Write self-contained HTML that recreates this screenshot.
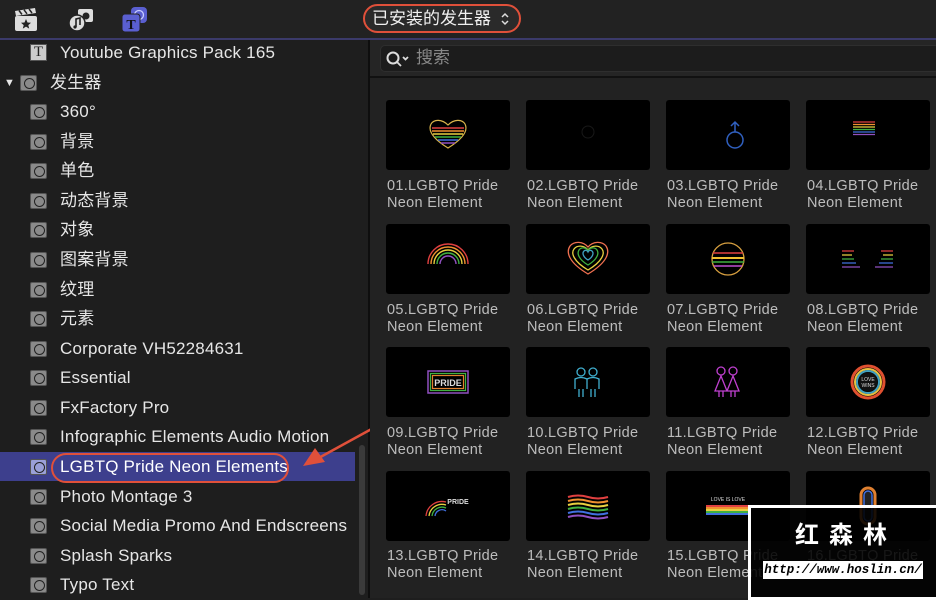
<!DOCTYPE html>
<html><head><meta charset="utf-8"><style>
*{margin:0;padding:0;box-sizing:border-box}
body{width:936px;height:598px;background:#1e1e1e;position:relative;overflow:hidden;font-family:"Liberation Sans","Noto Sans CJK SC",sans-serif;color:#e6e6e6}
.a{position:absolute}
.row{position:absolute;left:0;width:355px;height:29px;font-size:17px;line-height:30px}
.row .ic{position:absolute;left:30px;top:7px;width:17px;height:16px;background:#8a8a8a;border:1px solid #555;border-radius:2px}
.row .ic:after{content:"";position:absolute;left:3px;top:2px;width:9px;height:9px;border:1.5px solid #222;border-radius:50%}
.row span{position:absolute;left:60px;letter-spacing:0.2px}
.th{position:absolute;width:124px;height:70px;background:#000;border-radius:3px}
.lb{position:absolute;font-size:14.5px;line-height:17px;color:#bdbdbd;width:140px;letter-spacing:0.3px}
</style></head><body>
<div class="a" style="left:0;top:0;width:936px;height:38px;background:#222"></div>
<div class="a" style="left:0;top:38px;width:936px;height:2px;background:#3b3a6a"></div>
<svg class="a" style="left:13px;top:7px" width="26" height="26" viewBox="0 0 26 26"><rect x="2" y="9" width="22" height="15" rx="2" fill="#ddd"/><path d="M2 4l20-3 1 5-20 3z" fill="#ddd"/><path d="M6 3.5l3 4M11 2.8l3 4M16 2l3 4" stroke="#222" stroke-width="1.5"/><path d="M13 12l1.5 3.5 3.5.3-2.7 2.3.9 3.5-3.2-2-3.2 2 .9-3.5-2.7-2.3 3.5-.3z" fill="#222"/></svg>
<svg class="a" style="left:67px;top:6px" width="28" height="28" viewBox="0 0 28 28"><rect x="11" y="3" width="15" height="13" rx="2" fill="#ddd"/><circle cx="19" cy="10" r="3.5" fill="#222"/><circle cx="10" cy="17" r="8" fill="#ddd" stroke="#222" stroke-width="1.5"/><path d="M9 21V13l4-1v7" stroke="#222" stroke-width="1.6" fill="none"/><circle cx="8" cy="21" r="1.6" fill="#222"/></svg>
<svg class="a" style="left:121px;top:6px" width="28" height="28" viewBox="0 0 28 28"><rect x="10" y="1" width="16" height="16" rx="4" fill="#5a5fd0"/><circle cx="18" cy="9" r="4.5" fill="none" stroke="#c8ccff" stroke-width="1.3"/><rect x="1" y="8" width="18" height="18" rx="3" fill="#5a5fd0" stroke="#222" stroke-width="1"/><text x="10" y="23" font-size="14" font-family="Liberation Serif" font-weight="bold" fill="#111" text-anchor="middle">T</text></svg>
<div class="a" style="left:363px;top:4px;width:158px;height:29px;border:2.5px solid #e0503a;border-radius:15px;background:#2a2a2a"></div>
<div class="a" style="left:372px;top:9px;font-size:17px;color:#f0f0f0;line-height:20px">已安装的发生器</div>
<svg class="a" style="left:499px;top:11px" width="12" height="16"><path d="M3 6l3-3 3 3M3 10l3 3 3-3" stroke="#ddd" stroke-width="1.5" fill="none"/></svg>
<div class="a" style="left:0;top:40px;width:356px;height:558px;background:#1e1e1e"></div>
<div class="a" style="left:0;top:452px;width:355px;height:29px;background:#3d3f8d"></div>
<div class="row" style="top:38px"><div class="a" style="left:30px;top:6px;width:17px;height:17px;background:#ccc;border:1px solid #555;font-family:'Liberation Serif';font-size:15px;line-height:15px;color:#222;text-align:center">T</div><span>Youtube Graphics Pack 165</span></div>
<div class="row" style="top:68px"><div class="a" style="left:4px;top:0;font-size:11px">▼</div><div class="ic" style="left:20px"></div><span style="left:50px">发生器</span></div>
<div class="row" style="top:97px"><div class="ic"></div><span>360°</span></div>
<div class="row" style="top:127px"><div class="ic"></div><span>背景</span></div>
<div class="row" style="top:156px"><div class="ic"></div><span>单色</span></div>
<div class="row" style="top:186px"><div class="ic"></div><span>动态背景</span></div>
<div class="row" style="top:215px"><div class="ic"></div><span>对象</span></div>
<div class="row" style="top:245px"><div class="ic"></div><span>图案背景</span></div>
<div class="row" style="top:275px"><div class="ic"></div><span>纹理</span></div>
<div class="row" style="top:304px"><div class="ic"></div><span>元素</span></div>
<div class="row" style="top:334px"><div class="ic"></div><span>Corporate VH52284631</span></div>
<div class="row" style="top:363px"><div class="ic"></div><span>Essential</span></div>
<div class="row" style="top:393px"><div class="ic"></div><span>FxFactory Pro</span></div>
<div class="row" style="top:422px"><div class="ic"></div><span>Infographic Elements Audio Motion</span></div>
<div class="row" style="top:452px;color:#fff"><div class="ic" style="background:#9aa0d8"></div><span>LGBTQ Pride Neon Elements</span></div>
<div class="row" style="top:482px"><div class="ic"></div><span>Photo Montage 3</span></div>
<div class="row" style="top:511px"><div class="ic"></div><span>Social Media Promo And Endscreens</span></div>
<div class="row" style="top:541px"><div class="ic"></div><span>Splash Sparks</span></div>
<div class="row" style="top:570px"><div class="ic"></div><span>Typo Text</span></div>
<div class="a" style="left:51px;top:453px;width:238px;height:30px;border:2.5px solid #e0503a;border-radius:15px"></div>
<div class="a" style="left:359px;top:445px;width:6px;height:150px;background:#3a3a3a;border-radius:3px"></div>
<div class="a" style="left:368px;top:40px;width:2px;height:558px;background:#0e0e0e"></div>
<svg class="a" style="left:295px;top:420px" width="90" height="55"><path d="M82 6L20 40" stroke="#e0503a" stroke-width="2.5"/><path d="M8 46l12-18 10 14z" fill="#e0503a"/></svg>
<div class="a" style="left:370px;top:40px;width:566px;height:37px;background:#252525"></div>
<div class="a" style="left:380px;top:45px;width:560px;height:27px;background:#1c1c1c;border:1px solid #2e2e2e;border-radius:5px"></div>
<svg class="a" style="left:385px;top:50px" width="26" height="18"><circle cx="8" cy="8" r="5.5" stroke="#ddd" stroke-width="2" fill="none"/><path d="M12 12l4 4M18 7l2.5 2.5L23 7" stroke="#ddd" stroke-width="1.8" fill="none"/></svg>
<div class="a" style="left:416px;top:48px;font-size:17px;color:#888;line-height:20px">搜索</div>
<div class="a" style="left:370px;top:76px;width:566px;height:2px;background:#111"></div>
<div class="a" style="left:370px;top:78px;width:566px;height:520px;background:#222"></div>

<div class="th" style="left:386px;top:100px"><svg width="124" height="70"><path d="M62 48c-16-10-20-18-17-24 3-5 11-5 17 1 6-6 14-6 17-1 3 6-1 14-17 24z" fill="none" stroke="#d8b34a" stroke-width="1.2"/><g stroke-width="1.5"><path d="M46 28h32" stroke="#e04040"/><path d="M46 31h32" stroke="#f09030"/><path d="M47 34h30" stroke="#e8d040"/><path d="M49 37h26" stroke="#40b040"/><path d="M52 40h20" stroke="#4070e0"/><path d="M55 43h14" stroke="#9050c0"/></g></svg></div>
<div class="th" style="left:526px;top:100px"><svg width="124" height="70"><circle cx="62" cy="32" r="6" fill="none" stroke="#181818"/></svg></div>
<div class="th" style="left:666px;top:100px"><svg width="124" height="70"><circle cx="69" cy="40" r="8" fill="none" stroke="#3060c0" stroke-width="1.5"/><path d="M69 32V22M65 26l4-4 4 4" stroke="#3060c0" stroke-width="1.5" fill="none"/></svg></div>
<div class="th" style="left:806px;top:100px"><svg width="124" height="70"><g stroke-width="1.3"><path d="M47 22h22" stroke="#e04040"/><path d="M47 24.5h22" stroke="#f09030"/><path d="M47 27h22" stroke="#e8d040"/><path d="M47 29.5h22" stroke="#40b040"/><path d="M47 32h22" stroke="#4070e0"/><path d="M47 34.5h22" stroke="#9050c0"/></g></svg></div>

<div class="th" style="left:386px;top:224px"><svg width="124" height="70"><g fill="none" stroke-width="1.4"><path d="M42 40a20 20 0 0 1 40 0" stroke="#e04040"/><path d="M45 40a17 17 0 0 1 34 0" stroke="#f09030"/><path d="M48 40a14 14 0 0 1 28 0" stroke="#e8d040"/><path d="M51 40a11 11 0 0 1 22 0" stroke="#40b040"/><path d="M54 40a8 8 0 0 1 16 0" stroke="#9050c0"/></g></svg></div>
<div class="th" style="left:526px;top:224px"><svg width="124" height="70"><g fill="none" stroke-width="1.3"><path d="M62 50c-20-12-22-22-18-28 4-5 13-5 18 1 5-6 14-6 18-1 4 6 2 16-18 28z" stroke="#f07050"/><path d="M62 46c-15-9-17-17-14-21 3-4 10-4 14 1 4-5 11-5 14-1 3 4 1 12-14 21z" stroke="#e8d040"/><path d="M62 41c-10-6-11-12-9-15 2-3 7-3 9 1 2-4 7-4 9-1 2 3 1 9-9 15z" stroke="#40b040"/><path d="M62 36c-5-3-6-7-4-9 1-1 3-1 4 1 1-2 3-2 4-1 2 2 1 6-4 9z" stroke="#40a0c0"/></g></svg></div>
<div class="th" style="left:666px;top:224px"><svg width="124" height="70"><circle cx="62" cy="35" r="16" fill="none" stroke="#d8a040" stroke-width="1.3"/><path d="M47 29h30" stroke="#e04040" stroke-width="1.5"/><path d="M46 34h32" stroke="#f0c030" stroke-width="2"/><path d="M46 38h32" stroke="#40b040" stroke-width="1.5"/><path d="M48 42h28" stroke="#c050d0" stroke-width="1.5"/></svg></div>
<div class="th" style="left:806px;top:224px"><svg width="124" height="70"><g stroke-width="1.3"><path d="M36 27h12M75 27h12" stroke="#e04040"/><path d="M36 31h10M77 31h10" stroke="#e8d040"/><path d="M36 35h12M75 35h12" stroke="#40b040"/><path d="M36 39h14M73 39h14" stroke="#4070e0"/><path d="M36 43h18M69 43h18" stroke="#9050c0"/></g></svg></div>

<div class="th" style="left:386px;top:347px"><svg width="124" height="70"><rect x="42" y="24" width="40" height="22" fill="none" stroke="#9050c0" stroke-width="1.5"/><rect x="44.5" y="26.5" width="35" height="17" fill="none" stroke="#40b040" stroke-width="1.2"/><rect x="46.5" y="28.5" width="31" height="13" fill="none" stroke="#e08030" stroke-width="1.2"/><text x="62" y="39" font-size="9" font-weight="bold" fill="#ddd" text-anchor="middle" font-family="Liberation Sans">PRIDE</text></svg></div>
<div class="th" style="left:526px;top:347px"><svg width="124" height="70" fill="none" stroke="#40b0d0" stroke-width="1.3"><circle cx="55" cy="25" r="4"/><circle cx="67" cy="25" r="4"/><path d="M49 42v-10q6-3 12 0v10M61 42v-10q6-3 12 0v10M53 42v8M57 42v8M65 42v8M69 42v8"/></svg></div>
<div class="th" style="left:666px;top:347px"><svg width="124" height="70" fill="none" stroke="#c040d0" stroke-width="1.3"><circle cx="55" cy="24" r="4"/><circle cx="67" cy="24" r="4"/><path d="M55 29l-6 15h12zM67 29l-6 15h12zM53 44v6M57 44v6M65 44v6M69 44v6"/></svg></div>
<div class="th" style="left:806px;top:347px"><svg width="124" height="70"><circle cx="62" cy="35" r="16" fill="none" stroke="#e05030" stroke-width="3"/><circle cx="62" cy="35" r="13" fill="none" stroke="#e8c040" stroke-width="2"/><circle cx="62" cy="35" r="11" fill="none" stroke="#40a0c0" stroke-width="2"/><circle cx="62" cy="35" r="9.5" fill="#111"/><text x="62" y="34" font-size="5" fill="#ddd" text-anchor="middle">LOVE</text><text x="62" y="40" font-size="5" fill="#ddd" text-anchor="middle">WINS</text></svg></div>

<div class="th" style="left:386px;top:471px"><svg width="124" height="70"><g fill="none" stroke-width="1.3"><path d="M40 45a16 16 0 0 1 20-14" stroke="#e04040"/><path d="M43 45a13 13 0 0 1 17-11" stroke="#e8d040"/><path d="M46 45a10 10 0 0 1 14-8" stroke="#40b040"/><path d="M49 45a7 7 0 0 1 11-5" stroke="#4070e0"/></g><text x="72" y="33" font-size="7" font-weight="bold" fill="#ddd" text-anchor="middle">PRIDE</text></svg></div>
<div class="th" style="left:526px;top:471px"><svg width="124" height="70"><g stroke-width="2"><path d="M42 26q10-3 20 0t20 0" stroke="#e04040" fill="none"/><path d="M42 30q10-3 20 0t20 0" stroke="#f09030" fill="none"/><path d="M42 34q10-3 20 0t20 0" stroke="#e8d040" fill="none"/><path d="M42 38q10-3 20 0t20 0" stroke="#40b040" fill="none"/><path d="M42 42q10-3 20 0t20 0" stroke="#4070e0" fill="none"/><path d="M42 46q10-3 20 0t20 0" stroke="#9050c0" fill="none"/></g></svg></div>
<div class="th" style="left:666px;top:471px"><svg width="124" height="70"><text x="62" y="30" font-size="5" fill="#ddd" text-anchor="middle">LOVE IS LOVE</text><g stroke-width="2"><path d="M40 35h44" stroke="#e04040"/><path d="M40 37h44" stroke="#f09030"/><path d="M40 39h44" stroke="#e8d040"/><path d="M40 41h44" stroke="#40b040"/><path d="M40 43h44" stroke="#4070e0"/></g></svg></div>
<div class="th" style="left:806px;top:471px"><svg width="124" height="70"><rect x="55" y="17" width="14" height="36" rx="7" fill="none" stroke="#e08030" stroke-width="3"/><rect x="58" y="20" width="8" height="30" rx="4" fill="#222" stroke="#4070e0" stroke-width="1.5"/></svg></div>

<div class="lb" style="left:387px;top:178px">01.LGBTQ Pride<br>Neon Element</div>
<div class="lb" style="left:527px;top:178px">02.LGBTQ Pride<br>Neon Element</div>
<div class="lb" style="left:667px;top:178px">03.LGBTQ Pride<br>Neon Element</div>
<div class="lb" style="left:807px;top:178px">04.LGBTQ Pride<br>Neon Element</div>
<div class="lb" style="left:387px;top:302px">05.LGBTQ Pride<br>Neon Element</div>
<div class="lb" style="left:527px;top:302px">06.LGBTQ Pride<br>Neon Element</div>
<div class="lb" style="left:667px;top:302px">07.LGBTQ Pride<br>Neon Element</div>
<div class="lb" style="left:807px;top:302px">08.LGBTQ Pride<br>Neon Element</div>
<div class="lb" style="left:387px;top:425px">09.LGBTQ Pride<br>Neon Element</div>
<div class="lb" style="left:527px;top:425px">10.LGBTQ Pride<br>Neon Element</div>
<div class="lb" style="left:667px;top:425px">11.LGBTQ Pride<br>Neon Element</div>
<div class="lb" style="left:807px;top:425px">12.LGBTQ Pride<br>Neon Element</div>
<div class="lb" style="left:387px;top:548px">13.LGBTQ Pride<br>Neon Element</div>
<div class="lb" style="left:527px;top:548px">14.LGBTQ Pride<br>Neon Element</div>
<div class="lb" style="left:667px;top:548px">15.LGBTQ Pride<br>Neon Element</div>
<div class="lb" style="left:807px;top:548px">16.LGBTQ Pride<br>Neon Element</div>

<div class="a" style="left:748px;top:505px;width:192px;height:95px;border:3px solid #fff;border-right:none;background:rgba(0,0,0,0.88)"></div>
<div class="a" style="left:795px;top:522px;font-size:24px;font-weight:bold;color:#fff;letter-spacing:10px;line-height:28px">红森林</div>
<div class="a" style="left:763px;top:561px;width:160px;height:18px;background:#fff;color:#000;font-family:'Liberation Mono',monospace;font-style:italic;font-weight:bold;font-size:12.5px;line-height:18px;text-align:center">http://www.hoslin.cn/</div>
</body></html>
